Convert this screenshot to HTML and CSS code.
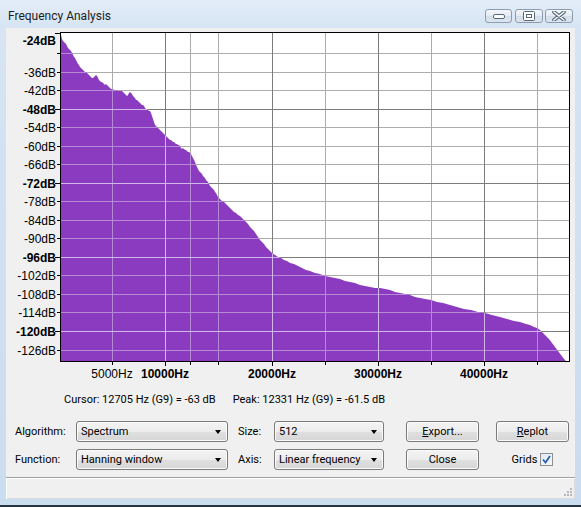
FILE: index.html
```html
<!DOCTYPE html>
<html lang="en">
<head>
    <meta charset="UTF-8">
    <meta name="viewport" content="width=device-width, initial-scale=1.0">
    <title>Frequency Analysis</title>
    <link rel="stylesheet" href="styles.css">
</head>
<body>
    <div class="window">
        <div class="titlebar">
            <span class="title">Frequency Analysis</span>
            <div class="caption-buttons">
                <span class="caption min">
                    <svg width="14" height="8" viewBox="0 0 14 8"><rect x="1.5" y="2.5" width="11" height="4" rx="1.5" fill="#fff" stroke="#55677d"/></svg>
                </span>
                <span class="caption max">
                    <svg width="12" height="10" viewBox="0 0 12 10"><rect x="0.5" y="0.5" width="11" height="9" rx="1" fill="#fff" stroke="#55677d"/><rect x="3.5" y="3.5" width="5" height="3" fill="#fff" stroke="#55677d"/></svg>
                </span>
                <span class="caption close">
                    <svg width="14" height="10" viewBox="0 0 14 10"><path d="M2 1 L12 9 M12 1 L2 9" stroke="#55677d" stroke-width="3.6" stroke-linecap="round"/><path d="M2 1 L12 9 M12 1 L2 9" stroke="#fff" stroke-width="1.6" stroke-linecap="round"/></svg>
                </span>
            </div>
        </div>

        <div class="client">
            <svg class="plot" width="569" height="358" viewBox="6 28 569 358">
                <defs>
                    <polygon id="spectrum" points="61,361 61,35 62,39 63,41 64,42 65,43 66,44 67,46 68,48 69,49 70,50 71,51 72,53 73,55 74,57 75,58 76,60 77,62 78,64 79,65 80,67 81,68 82,69 83,70 84,71 85,72 86,72 87,73 88,74 89,75 90,76 91,77 92,78 93,78 94,77 95,76 96,75 97,76 98,78 99,80 100,81 101,82 102,82 103,83 104,84 105,85 106,84 107,85 108,86 109,87 110,88 111,89 112,89 113,89 114,90 116,90 118,91 122,91 123,92 124,93 125,94 126,95 127,96 128,95 129,93 130,92 131,93 132,94 133,96 134,97 135,98 136,100 137,100 138,101 139,102 140,103 141,104 142,105 143,105 144,106 145,108 146,109 147,109 148,110 149,111 150,111 151,113 152,116 153,119 154,122 155,125 156,126 157,127 158,128 159,129 160,130 161,131 162,132 163,133 164,134 165,135 166,136 167,137 168,138 169,139 170,140 171,140 172,141 173,142 174,142 175,143 176,144 177,144 178,145 179,145 180,146 181,148 182,149 183,148 184,149 185,150 186,150 187,151 188,152 189,152 190,153 191,154 192,156 193,158 194,160 195,162 196,165 197,167 198,169 199,171 200,172 201,173 202,174 203,176 204,177 205,178 206,180 207,181 208,182 209,184 210,186 211,187 212,188 213,189 214,190 215,192 216,193 217,195 218,197 219,198 220,199 222,201 224,202 226,204 228,206 230,208 232,210 234,212 236,213 238,215 240,216 242,218 244,220 246,222 248,224 250,227 252,229 254,231 256,234 258,237 260,240 262,242 264,244 266,247 268,249 270,251 272,253 275,255 278,257 281,258 284,260 287,261 290,263 294,264 298,266 302,268 306,270 310,271 315,273 320,274 325,276 330,277 335,278 340,279 345,281 350,282 355,283 360,285 365,286 370,287 375,288 380,288 385,289 390,290 395,292 400,293 405,294 410,295 415,297 420,298 425,299 431,300 437,302 443,303 450,305 457,307 464,309 471,310 478,312 485,313 492,315 500,317 507,319 514,321 520,322 526,324 530,325 534,327 537,328 540,330 543,333 546,336 549,339 552,343 555,347 558,351 561,355 564,359 566,361"/>
                    <clipPath id="spectrum-clip"><use href="#spectrum"/></clipPath>
                    <g id="grid-minor">
                        <path d="M112.5 33V361 M190.5 33V361 M218.5 33V361 M325.5 33V361 M431.5 33V361 M537.5 33V361"/>
                        <path d="M61 53.5H569 M61 72.5H569 M61 90.5H569 M61 127.5H569 M61 146.5H569 M61 164.5H569 M61 201.5H569 M61 220.5H569 M61 238.5H569 M61 275.5H569 M61 294.5H569 M61 312.5H569 M61 350.5H569"/>
                    </g>
                    <g id="grid-major">
                        <path d="M165.5 33V361 M272.5 33V361 M378.5 33V361 M484.5 33V361"/>
                        <path d="M61 109.5H569 M61 183.5H569 M61 257.5H569 M61 331.5H569"/>
                    </g>
                </defs>

                <rect x="61" y="33" width="508" height="328" fill="#fff"/>
                <use href="#grid-minor" stroke="#acacac"/>
                <use href="#grid-major" stroke="#7c7c7c"/>
                <use href="#spectrum" fill="#8a3bbf"/>
                <g clip-path="url(#spectrum-clip)">
                    <use href="#grid-minor" stroke="#b689d6"/>
                    <use href="#grid-major" stroke="#d2b8e8"/>
                </g>
                <rect x="60.5" y="32.5" width="509" height="329" fill="none" stroke="#000"/>

                <!-- axis ticks -->
                <path stroke="#000" d="M55 33.5H60 M57 53.5H60 M57 72.5H60 M57 90.5H60 M55 109.5H60 M57 127.5H60 M57 146.5H60 M57 164.5H60 M55 183.5H60 M57 201.5H60 M57 220.5H60 M57 238.5H60 M55 257.5H60 M57 275.5H60 M57 294.5H60 M57 312.5H60 M55 331.5H60 M57 350.5H60"/>
                <path stroke="#000" d="M112.5 362V365 M165.5 362V366 M190.5 362V365 M218.5 362V365 M272.5 362V366 M325.5 362V365 M378.5 362V366 M431.5 362V365 M484.5 362V366 M537.5 362V365"/>

                <g class="axis-label">
                    <text x="56" y="45" class="major">-24dB</text>
                    <text x="56" y="77">-36dB</text>
                    <text x="56" y="95">-42dB</text>
                    <text x="56" y="114" class="major">-48dB</text>
                    <text x="56" y="132">-54dB</text>
                    <text x="56" y="151">-60dB</text>
                    <text x="56" y="169">-66dB</text>
                    <text x="56" y="188" class="major">-72dB</text>
                    <text x="56" y="206">-78dB</text>
                    <text x="56" y="225">-84dB</text>
                    <text x="56" y="243">-90dB</text>
                    <text x="56" y="262" class="major">-96dB</text>
                    <text x="56" y="280">-102dB</text>
                    <text x="56" y="299">-108dB</text>
                    <text x="56" y="317">-114dB</text>
                    <text x="56" y="336" class="major">-120dB</text>
                    <text x="56" y="355">-126dB</text>
                </g>
                <g class="axis-label hz">
                    <text x="112" y="378">5000Hz</text>
                    <text x="165" y="378" class="major">10000Hz</text>
                    <text x="272" y="378" class="major">20000Hz</text>
                    <text x="378" y="378" class="major">30000Hz</text>
                    <text x="484" y="378" class="major">40000Hz</text>
                </g>
            </svg>

            <div class="info">
                <span>Cursor: 12705 Hz (G9) = -63 dB</span>
                <span>Peak: 12331 Hz (G9) = -61.5 dB</span>
            </div>

            <div class="controls">
                <span class="label">Algorithm:</span>
                <div class="combo wide">Spectrum<span class="arrow"></span></div>
                <span class="label">Size:</span>
                <div class="combo">512<span class="arrow"></span></div>
                <button class="btn"><u>E</u>xport...</button>
                <button class="btn"><u>R</u>eplot</button>

                <span class="label">Function:</span>
                <div class="combo wide">Hanning window<span class="arrow"></span></div>
                <span class="label">Axis:</span>
                <div class="combo">Linear frequency<span class="arrow"></span></div>
                <button class="btn">Close</button>
                <div class="grids">
                    Grids
                    <span class="check">
                        <svg width="9" height="9" viewBox="0 0 9 9"><path d="M1 4.5 L3.5 7.5 L8 1" fill="none" stroke="#2d5ea9" stroke-width="1.8"/></svg>
                    </span>
                </div>
            </div>

            <div class="statusbar">
                <svg class="grip" width="10" height="10" viewBox="0 0 10 10">
                    <g fill="#b5b9bf">
                        <rect x="7" y="1" width="2" height="2"/>
                        <rect x="4" y="4" width="2" height="2"/><rect x="7" y="4" width="2" height="2"/>
                        <rect x="1" y="7" width="2" height="2"/><rect x="4" y="7" width="2" height="2"/><rect x="7" y="7" width="2" height="2"/>
                    </g>
                </svg>
            </div>
        </div>
    </div>
</body>
</html>
```

FILE: styles.css
```css
/* Windows 7 style dialog frame */
body {
    margin: 0;
    font-family: Roboto, "Noto Sans", sans-serif;
    font-size: 11px;
    color: #000;
}

.window {
    width: 581px;
    height: 507px;
    box-sizing: border-box;
    padding: 0 6px 6px;
    display: flex;
    flex-direction: column;
    background: linear-gradient(180deg, #e3edf8 0px, #d6e4f3 28px, #cadcef 100%);
    border-bottom: 2px solid #28323d;
}

.titlebar {
    height: 28px;
    display: flex;
    align-items: flex-start;
    justify-content: space-between;
}

.title {
    margin: 9px 0 0 2px;
    font-size: 12px;
    color: #1c1c1c;
}

.caption-buttons {
    display: flex;
    margin: 9px 2px 0 0;
}

.caption {
    width: 27px;
    height: 14px;
    box-sizing: border-box;
    border: 1px solid #8c9cb0;
    border-radius: 3px;
    background: linear-gradient(180deg, #f3f6fa 0%, #e3eaf2 50%, #d3dde8 51%, #dde5ee 100%);
    display: flex;
    align-items: center;
    justify-content: center;
}

.caption.max {
    width: 28px;
    margin-left: 3px;
}

.caption.close {
    width: 28px;
    margin-left: 2px;
}

.client {
    flex: 1;
    display: flex;
    flex-direction: column;
    background: #f0f0f0;
}

.plot {
    display: block;
}

.axis-label text {
    font-family: "Liberation Sans", Arial, sans-serif;
    font-size: 12px;
    fill: #000;
    text-anchor: end;
}

.axis-label.hz text {
    text-anchor: middle;
}

.axis-label text.major {
    font-weight: bold;
}

.info {
    height: 26px;
    display: flex;
    align-items: center;
    gap: 17px;
    padding-left: 58px;
}

.controls {
    display: grid;
    grid-template-columns: 61px 162px 36px 132px 90px 73px;
    grid-template-rows: 21px 21px;
    row-gap: 7px;
    align-items: center;
    margin-top: 9px;
    padding-left: 9px;
}

/* combo boxes and buttons share the same look */
.combo,
.btn {
    height: 21px;
    box-sizing: border-box;
    border: 1px solid #7a7a7a;
    border-radius: 3px;
    background: linear-gradient(180deg, #f4f4f4 0%, #ececec 50%, #e0e0e0 51%, #d6d6d6 100%);
    box-shadow: inset 0 0 0 1px #fbfbfb;
    font-family: inherit;
    font-size: 11px;
    color: #000;
}

.combo {
    width: 110px;
    display: flex;
    align-items: center;
    justify-content: space-between;
    padding: 0 6px 0 4px;
}

.combo.wide {
    width: 152px;
}

.arrow {
    width: 0;
    height: 0;
    border-left: 3.5px solid transparent;
    border-right: 3.5px solid transparent;
    border-top: 4px solid #000;
}

.btn {
    width: 73px;
    padding: 0;
    text-align: center;
}

.grids {
    display: flex;
    align-items: center;
    justify-content: center;
    gap: 3px;
}

.check {
    width: 13px;
    height: 13px;
    box-sizing: border-box;
    border: 1px solid #8e8f8f;
    background: linear-gradient(135deg, #dfe9f5, #f4f8fc);
    display: flex;
    align-items: center;
    justify-content: center;
}

.statusbar {
    margin-top: auto;
    height: 22px;
    box-sizing: border-box;
    border-top: 1px solid #a0a0a0;
    box-shadow: inset 1px 1px 0 #fff, inset -1px -1px 0 #dcdcdc;
    display: flex;
    justify-content: flex-end;
    align-items: flex-end;
    padding: 0 2px 2px 0;
}
```
